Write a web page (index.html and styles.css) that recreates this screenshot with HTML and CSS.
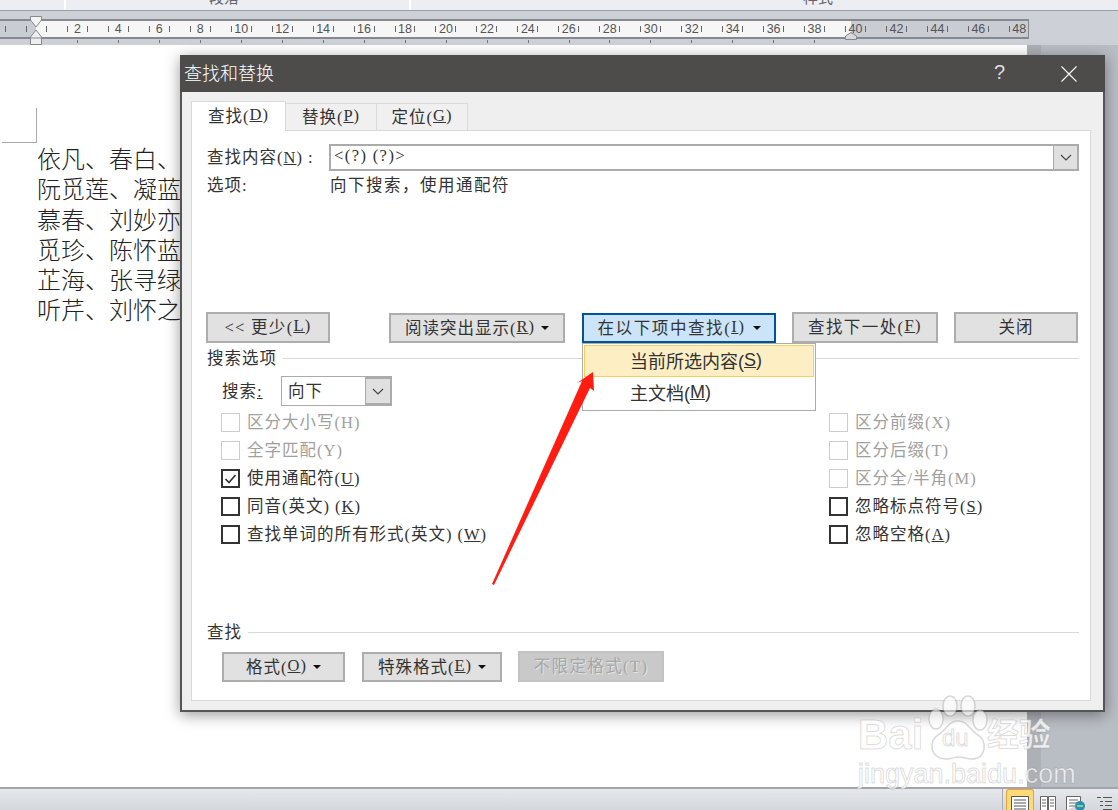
FILE: index.html
```html
<!DOCTYPE html>
<html lang="zh-CN">
<head>
<meta charset="utf-8">
<title>查找和替换</title>
<link rel="stylesheet" href="styles.css">
</head>
<body>
<div class="app">
  <div class="ribbon">
    <div class="rib-cell rib-a"></div>
    <div class="rib-cell rib-b"><span>段落</span></div>
    <div class="rib-cell rib-c"><span>样式</span></div>
  </div>
  <div class="ruler-band">
    <div class="ruler">
      <div class="ruler-track">
        <div class="rc"><i></i></div><div class="rc"><i></i></div>
        <div class="rc"><b>2</b></div><div class="rc"><b>4</b></div><div class="rc"><b>6</b></div><div class="rc"><b>8</b></div>
        <div class="rc"><b>10</b></div><div class="rc"><b>12</b></div><div class="rc"><b>14</b></div><div class="rc"><b>16</b></div>
        <div class="rc"><b>18</b></div><div class="rc"><b>20</b></div><div class="rc"><b>22</b></div><div class="rc"><b>24</b></div>
        <div class="rc"><b>26</b></div><div class="rc"><b>28</b></div><div class="rc"><b>30</b></div><div class="rc"><b>32</b></div>
        <div class="rc"><b>34</b></div><div class="rc"><b>36</b></div><div class="rc"><b>38</b></div><div class="rc"><b>40</b></div>
        <div class="rc"><b>42</b></div><div class="rc"><b>44</b></div><div class="rc"><b>46</b></div><div class="rc"><b>48</b></div>
      </div>
    </div>
    <div class="ruler-ticks"></div>
    <svg class="indent-left" width="14" height="29" viewBox="0 0 14 29"><path d="M1.500 .5H12.500V4L7 11 1.500 4Z" fill="#f4f4f4" stroke="#85888d"/><path d="M7 14 12.500 21V28.500H1.500V21Z" fill="#eeeeee" stroke="#85888d"/><path d="M1.500 22H12.500" stroke="#85888d"/></svg>
    <svg class="indent-right" width="12" height="8" viewBox="0 0 12 8"><path d="M.5 7.500V4L6 .5 11.500 4V7.500Z" fill="#d8d8d8" stroke="#85888d"/></svg>
  </div>
  <div class="workspace">
    <div class="page">
      <div class="crop-mark"></div>
      <div class="doc-text">
        <p>依凡、春白、</p>
        <p>阮觅莲、凝蓝、</p>
        <p>慕春、刘妙亦</p>
        <p>觅珍、陈怀蓝</p>
        <p>芷海、张寻绿、</p>
        <p>听芹、刘怀之</p>
      </div>
    </div>
    <div class="scroll-track"></div>
    <div class="backdrop"></div>
  </div>
  <div class="status">
    <div class="status-sep"></div>
    <div class="view-btn active">
      <svg width="18" height="14" viewBox="0 0 18 14"><path d="M.5 14V.5H17.500V14" fill="#fff" stroke="#555"/><path d="M3 4H15M3 7H15M3 10H15M3 13H15" stroke="#555"/></svg>
    </div>
    <div class="view-btn">
      <svg width="16" height="14" viewBox="0 0 16 14"><path d="M.5 14V.5H7.500V14M8.500 14V.5H15.500V14" fill="#fff" stroke="#666"/><path d="M2 4H6M2 7H6M2 10H6M10 4H14M10 7H14M10 10H14" stroke="#666"/></svg>
    </div>
    <div class="view-btn">
      <svg width="20" height="14" viewBox="0 0 20 14"><path d="M.5 14V.5H14.500V8" fill="#fff" stroke="#666"/><path d="M3 4H12M3 7H12M3 10H9" stroke="#666"/><circle cx="14" cy="10" r="5" fill="#2f8fa8"/><path d="M11 10H17" stroke="#7fd0a0" stroke-width="2"/></svg>
    </div>
    <div class="view-btn">
      <svg width="15" height="14" viewBox="0 0 15 14"><path d="M0 1.500H4M6 1.500H15M3 5.500H6M8 5.500H15M3 9.500H6M8 9.500H15M6 13.500H15" stroke="#555"/></svg>
    </div>
  </div>
</div>

<section class="dialog">
  <header class="titlebar">
    <span class="title">查找和替换</span>
    <span class="help">?</span>
    <svg class="close" width="16" height="16" viewBox="0 0 16 16"><path d="M.5 .5 15.500 15.500M15.500 .5 .5 15.500" stroke="#fff" stroke-width="1.100"/></svg>
  </header>
  <nav class="tabs">
    <div class="tab tab-on">查找(<u>D</u>)</div>
    <div class="tab">替换(<u>P</u>)</div>
    <div class="tab">定位(<u>G</u>)</div>
  </nav>
  <div class="panel">
    <div class="find-row">
      <label class="find-label">查找内容(<u>N</u>)<span class="gap"></span>:</label>
      <div class="find-input">
        <span class="find-value">&lt;(?)<span class="gap"></span>(?)&gt;</span>
        <span class="combo-btn"><svg width="12" height="7" viewBox="0 0 12 7"><path d="M1 1 6 6 11 1" fill="none" stroke="#444" stroke-width="1.100"/></svg></span>
      </div>
    </div>
    <div class="opt-row">
      <span class="opt-label">选项:</span>
      <span class="opt-value">向下搜索，使用通配符</span>
    </div>
    <div class="btn-row">
      <button class="btn b-less">&lt;&lt; 更少(<u>L</u>)</button>
      <button class="btn b-read">阅读突出显示(<u>R</u>)<i class="caret"></i></button>
      <button class="btn b-in active">在以下项中查找(<u>I</u>)<i class="caret"></i></button>
      <button class="btn b-next">查找下一处(<u>F</u>)</button>
      <button class="btn b-close">关闭</button>
    </div>
    <div class="section-head"><span>搜索选项</span><hr></div>
    <div class="search-row">
      <span class="search-label">搜索<u>:</u></span>
      <div class="search-combo">
        <span class="search-value">向下</span>
        <span class="combo-btn"><svg width="12" height="7" viewBox="0 0 12 7"><path d="M1 1 6 6 11 1" fill="none" stroke="#444" stroke-width="1.100"/></svg></span>
      </div>
    </div>
    <div class="checks">
      <div class="check-col">
        <div class="check off"><span class="box"></span>区分大小写(H)</div>
        <div class="check off"><span class="box"></span>全字匹配(Y)</div>
        <div class="check"><span class="box"><svg width="15" height="15" viewBox="0 0 15 15"><path d="M2.500 8 6 11.500 12.500 4" fill="none" stroke="#333" stroke-width="1.700"/></svg></span><span>使用通配符(<u>U</u>)</span></div>
        <div class="check"><span class="box"></span><span>同音(英文)<span class="gap"></span>(<u>K</u>)</span></div>
        <div class="check"><span class="box"></span><span>查找单词的所有形式(英文)<span class="gap"></span>(<u>W</u>)</span></div>
      </div>
      <div class="check-col col-right">
        <div class="check off"><span class="box"></span>区分前缀(X)</div>
        <div class="check off"><span class="box"></span>区分后缀(T)</div>
        <div class="check off"><span class="box"></span>区分全/半角(M)</div>
        <div class="check"><span class="box"></span><span>忽略标点符号(<u>S</u>)</span></div>
        <div class="check"><span class="box"></span><span>忽略空格(<u>A</u>)</span></div>
      </div>
    </div>
    <div class="section-head section-find"><span>查找</span><hr></div>
    <div class="format-row">
      <button class="btn b-format">格式(<u>O</u>)<i class="caret"></i></button>
      <button class="btn b-special">特殊格式(<u>E</u>)<i class="caret"></i></button>
      <button class="btn b-clear" disabled>不限定格式(T)</button>
    </div>
  </div>
  <div class="menu">
    <div class="menu-item hot">当前所选内容(<u>S</u>)</div>
    <div class="menu-item">主文档(<u>M</u>)</div>
  </div>
</section>

<svg class="arrow" width="130" height="230" viewBox="480 360 130 230"><path d="M593 372 594 391 590 388 494 585 492 584 582 381 577 383Z" fill="#ff1d12"/></svg>

<div class="watermark">
  <svg class="paw" width="90" height="70" viewBox="0 0 90 70"><g fill="rgba(255,255,255,.6)" stroke="rgba(120,120,120,.28)" stroke-width="1.500"><ellipse cx="10" cy="26" rx="7" ry="10"/><ellipse cx="24" cy="13" rx="7" ry="10"/><ellipse cx="42" cy="13" rx="7" ry="10"/><ellipse cx="54" cy="27" rx="7" ry="10"/><path d="M32 28C22 28 20 38 12 42 2 48 4 66 20 66 26 66 28 64 32 64 38 64 40 66 46 66 60 66 62 48 52 42 44 38 42 28 32 28Z"/></g></svg>
  <span class="wm-bai">Bai</span>
  <span class="wm-du">du</span>
  <span class="wm-cn">经验</span>
  <span class="wm-url">jingyan.baidu.com</span>
</div>
</body>
</html>
```
FILE: styles.css
```css
* { box-sizing: border-box; }
html, body { margin: 0; padding: 0; }
body {
  width: 1118px;
  height: 810px;
  overflow: hidden;
  position: relative;
  font-family: "Liberation Serif", "Noto Sans CJK SC", serif;
  font-size: 16.5px;
  color: #333;
}
.app { width: 1118px; height: 810px; display: flex; flex-direction: column; }
.gap { display: inline-block; width: 5px; }

/* ribbon remnant */
.ribbon { height: 11px; display: flex; background: #eceef3; border-bottom: 1px solid #9a9da3; overflow: hidden; }
.rib-cell { height: 10px; display: flex; justify-content: center; align-items: flex-end; border-right: 2px solid #fff; overflow: hidden; padding-bottom: 5px; font-family: "Noto Sans CJK SC", sans-serif; font-size: 15px; line-height: 16px; color: #666; }
.rib-a { width: 66px; }
.rib-b { width: 345px; }
.rib-c { flex: 1; border-right: 0; padding-right: 0; justify-content: flex-start; padding-left: 392px; }
.rib-b span { flex: none; margin-right: 27px; }
.rib-c span { flex: none; }

/* ruler */
.ruler-band { height: 34px; background: #cdd0d6; padding-top: 8px; position: relative; }
.ruler {
  width: 1029px;
  height: 20px;
  border: 1px solid #85888d;
  border-left: 0;
  border-width: 2px 1px 2px 0;
  overflow: hidden;
  background: linear-gradient(90deg, #c9ccd3 36px, #f6f6f7 36px, #f6f6f7 851px, #c9ccd3 851px);
}
.ruler-track { display: flex; margin-left: -25px; height: 16px; }
.rc {
  flex: none;
  width: 40.960px;
  padding: 0 10px;
  display: flex;
  justify-content: space-between;
  align-items: center;
  font: 12.500px/16px "Liberation Sans", sans-serif;
  color: #555;
}
.rc::before, .rc::after { content: ""; width: 1px; height: 6px; background: #666; flex: none; }
.rc b { font-weight: 400; }
.rc i { display: none; }
.ruler-ticks {
  margin: 1px 0 0 77px;
  width: 743px;
  height: 3px;
  background: repeating-linear-gradient(90deg, #777 0, #777 1px, transparent 1px, transparent 40.960px);
}
.indent-left { position: absolute; left: 29px; top: 5px; }
.indent-right { position: absolute; left: 845px; top: 21px; }

/* workspace */
.workspace { flex: 1; display: flex; background: #b9bdc4; min-height: 0; }
.page { width: 1027px; background: #fff; padding: 63px 0 0 2px; }
.crop-mark { width: 35px; height: 35px; border-right: 1px solid #aaa; border-bottom: 1px solid #aaa; }
.doc-text { margin: 0 0 0 35px; width: 143px; overflow: hidden; font-family: "Noto Sans CJK SC", serif; font-size: 24px; font-weight: 300; line-height: 30.300px; color: #222; }
.doc-text p { margin: 0; white-space: nowrap; }
.scroll-track { width: 14px; background: #adb0b5; }
.backdrop { flex: 1; }

/* status bar */
.status { height: 23px; display: flex; align-items: flex-end; justify-content: flex-end; background: linear-gradient(#e6e8ec, #d4d7dc); border-top: 2px solid #a2a5ab; }
.status-sep { width: 1px; height: 21px; background: #a8abb1; margin-right: 3px; }
.view-btn { width: 28px; height: 21px; display: flex; justify-content: center; align-items: flex-end; }
.view-btn.active { background: #fdd977; border: 1px solid #e3a53c; border-bottom: 0; border-radius: 3px 3px 0 0; }

/* dialog */
.dialog {
  position: absolute;
  left: 180px;
  top: 55px;
  width: 925px;
  height: 657px;
  background: #efefef;
  border: 2px solid #555;
  border-top: 0;
  box-shadow: 0 3px 14px rgba(0, 0, 0, .4);
  display: flex;
  flex-direction: column;
}
.titlebar { height: 37px; margin: 0 -2px; background: #4d4c4a; color: #fff; display: flex; align-items: center; padding: 0 28px 3px 4px; flex: none; }
.title { font-family: "Noto Sans CJK SC", sans-serif; font-weight: 300; font-size: 18px; flex: 1; }
.help { font: 20px "Liberation Sans", sans-serif; margin-right: 56px; color: #ddd; }
.close { margin-top: 3px; }
.tabs { height: 38px; display: flex; align-items: flex-end; padding-left: 9px; flex: none; position: relative; z-index: 1; }
.tab { width: 91px; height: 27px; background: #f0f0f0; border: 1px solid #d9d9d9; border-left: 0; border-bottom: 0; display: flex; align-items: center; justify-content: center; letter-spacing: 1px; padding-bottom: 2px; }
.tab-on { width: 95px; height: 30px; background: #fff; border-left: 1px solid #d9d9d9; margin-bottom: -1px; padding-bottom: 4px; }
.panel { flex: none; height: 571px; margin: 0 12px 0 9px; background: #fff; border: 1px solid #d9d9d9; padding: 13px 11px 0 15px; }
.panel, .menu { letter-spacing: 1px; }

.find-row { display: flex; height: 27px; align-items: center; }
.find-label { width: 122px; flex: none; white-space: nowrap; padding-bottom: 4px; }
.find-input { flex: 1; height: 27px; border: 2px solid #ababab; border-right-width: 1px; display: flex; align-items: center; justify-content: space-between; padding-left: 3px; }
.find-value { letter-spacing: 1.500px; padding-bottom: 3px; }
.combo-btn { align-self: stretch; width: 25px; background: #e0e0e0; border-left: 1px solid #ababab; border-right: 1px solid #ababab; display: flex; align-items: center; justify-content: center; }
.opt-row { display: flex; height: 24px; margin-top: 2px; align-items: center; padding-bottom: 2px; }
.opt-label { width: 123px; flex: none; }
.opt-value { letter-spacing: 1.500px; }

.btn-row { display: flex; align-items: flex-end; margin: 115px 0 0 -1px; height: 31px; }
.btn {
  height: 30px;
  background: #e1e1e1;
  border: 2px solid #adadad;
  font: inherit;
  color: #333;
  letter-spacing: 1px;
  padding: 0 0 3px;
  display: flex;
  align-items: center;
  justify-content: center;
  white-space: nowrap;
  flex: none;
}
.btn.active { background: #cce4f7; border-color: #005499; }
.caret { width: 0; height: 0; border: 4px solid transparent; border-top: 4px solid #111; border-bottom: 0; margin: 2px 0 0 6px; }
.b-less { width: 124px; height: 31px; margin-right: 59px; letter-spacing: 1.300px; }
.b-read { width: 176px; margin-right: 17px; }
.b-in { width: 194px; margin-right: 16px; letter-spacing: 1.600px; }
.b-in .caret { margin-left: 7px; }
.b-next { width: 146px; margin-right: 16px; height: 31px; letter-spacing: 1.400px; }
.b-close { width: 124px; height: 31px; }

.section-head { display: flex; align-items: center; height: 24px; margin-top: 3px; gap: 6px; }
.section-head span { flex: none; margin-top: -2px; }
.section-head hr { flex: 1; margin: 0; border: 0; height: 1px; background: #d9d9d9; }
.section-find { margin-top: 72px; }

.search-row { display: flex; align-items: center; height: 30px; margin: 6px 0 0 15px; }
.search-label { width: 59px; flex: none; padding-bottom: 2px; }
.search-combo { width: 111px; height: 30px; border: 1px solid #ababab; border-right: 0; display: flex; justify-content: space-between; align-items: center; padding-left: 6px; }
.search-value { padding-bottom: 2px; }
.search-combo .combo-btn { width: 27px; border: 2px solid #ababab; border-left: 1px solid #ababab; }

.checks { display: flex; justify-content: space-between; margin: 2px 0 0 14px; }
.check-col { display: flex; flex-direction: column; }
.col-right { width: 250px; }
.check { height: 28px; display: flex; align-items: center; white-space: nowrap; padding-bottom: 2px; }
.box { width: 19px; height: 19px; border: 2px solid #333; margin: 0 7px -2px 0; flex: none; display: flex; align-items: center; justify-content: center; }
.check.off { color: #a0a0a0; }
.check.off .box { border: 1px solid #cccccc; }

.format-row { display: flex; margin: 7px 0 0 15px; align-items: flex-end; height: 31px; }
.b-format { width: 123px; margin-right: 17px; }
.b-special { width: 140px; margin-right: 16px; }
.b-clear { width: 146px; height: 31px; background: #c9c9c9; border-color: #c3c3c3; color: #a6a6a6; text-shadow: 1px 1px 0 #e4e4e4; letter-spacing: 1.400px; }

.menu {
  position: absolute;
  left: 400px;
  top: 288px;
  width: 234px;
  height: 68px;
  background: #fff;
  border: 1px solid #ababab;
  padding: 1px;
  font-family: "Liberation Sans", "Noto Sans CJK SC", sans-serif;
  font-size: 18px;
  letter-spacing: 0;
}
.menu-item { height: 32px; display: flex; align-items: center; padding: 0 0 2px 45px; border: 1px solid transparent; }
.menu-item.hot { background: #fdeec4; border-color: #f5ce5c; }

/* annotation */
.arrow { position: absolute; left: 480px; top: 360px; }

/* watermark */
.watermark { position: absolute; left: 850px; top: 690px; width: 220px; height: 100px; color: rgba(255, 255, 255, .75); -webkit-text-stroke: 1px rgba(120, 120, 120, .26); font-family: "Liberation Sans", sans-serif; }
.watermark span { position: absolute; line-height: 1; white-space: nowrap; }
.paw { position: absolute; left: 76px; top: 3px; }
.wm-bai { left: 8px; top: 24px; font-size: 42px; font-weight: 700; }
.wm-du { left: 92px; top: 36px; font-size: 24px; }
.wm-cn { left: 137px; top: 26px; font-size: 32px; font-family: "Noto Sans CJK SC", sans-serif; font-weight: 700; }
.wm-url { left: 8px; top: 71px; font-size: 27px; }
```
